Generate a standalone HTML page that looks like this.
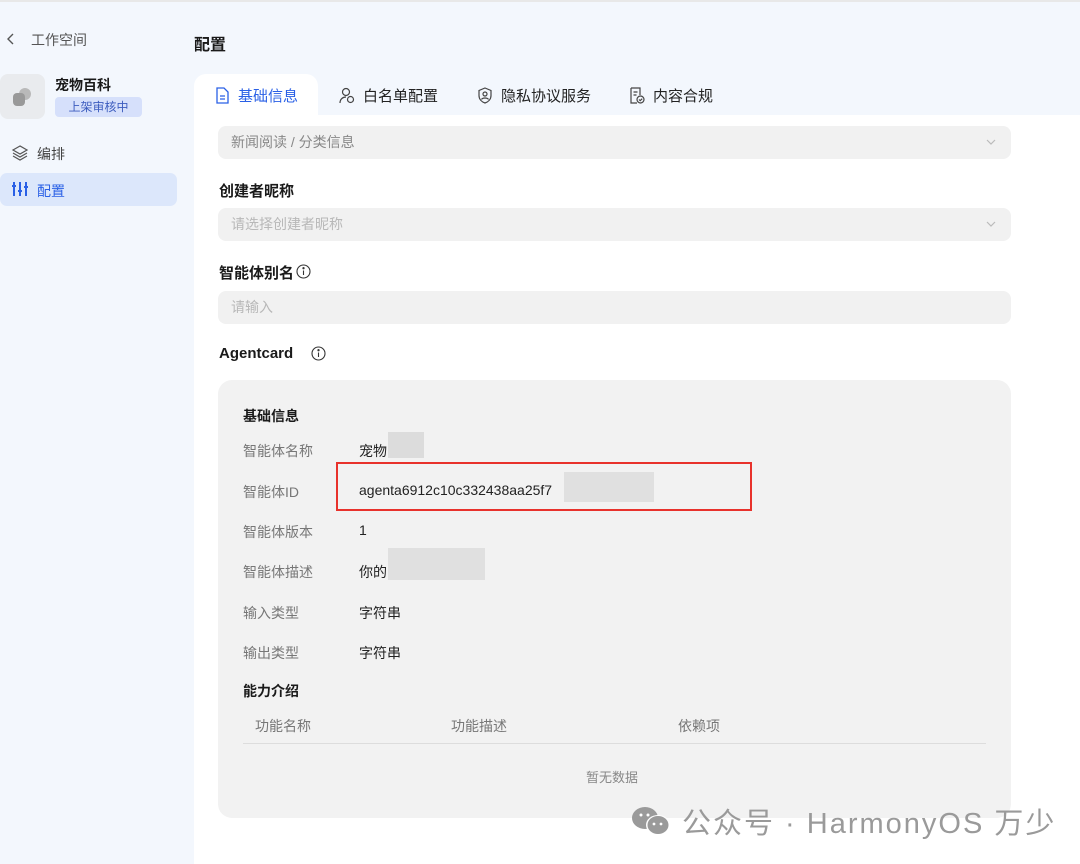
<!DOCTYPE html>
<html><head><meta charset="utf-8"><style>
*{margin:0;padding:0;box-sizing:border-box}
body{width:1080px;height:864px;overflow:hidden;background:#f3f7fd;font-family:"Liberation Sans","Noto Sans CJK SC",sans-serif;position:relative;color:#1a1a1a}
.a{position:absolute}
.topline{left:0;top:0;width:1080px;height:2px;background:#e8e8e8}
.main{left:194px;top:115px;width:886px;height:749px;background:#fff}
.tab{top:74px;height:42px;font-size:15px;display:flex;align-items:center;gap:8px;color:#222}
.inp{left:218px;width:793px;height:33px;background:#f1f1f1;border-radius:8px;font-size:14px;color:#888;padding-left:13px;line-height:33px}
.inp.ph{color:#b8b8b8}
.chev{position:absolute;right:14px;top:10px}
.lbl{left:219px;font-size:15px;font-weight:bold;color:#1a1a1a}
.k{left:243px;font-size:14px;color:#777}
.v{left:359px;font-size:14px;color:#222}
.blur{background:#e0e0e0}
</style></head><body>
<div class="a topline"></div>
<svg class="a" style="left:6px;top:32px" width="10" height="14" viewBox="0 0 10 14"><path d="M7 2L2 7l5 5" fill="none" stroke="#555" stroke-width="1.4"/></svg>
<div class="a" style="left:31px;top:30px;font-size:14px;color:#555">工作空间</div>
<div class="a" style="left:0;top:74px;width:45px;height:45px;background:#e9ebee;border-radius:8px"></div>
<svg class="a" style="left:10px;top:84px" width="26" height="26" viewBox="0 0 26 26"><circle cx="15" cy="10" r="6" fill="#b9b9b9"/><rect x="3" y="9" width="12" height="13" rx="4" fill="#999"/></svg>
<div class="a" style="left:55px;top:75px;font-size:14px;font-weight:bold">宠物百科</div>
<div class="a" style="left:55px;top:97px;width:87px;height:20px;background:#d6e0fb;border-radius:4px;font-size:12px;color:#3d5dbf;text-align:center;line-height:20px">上架审核中</div>
<svg class="a" style="left:11px;top:144px" width="18" height="18" viewBox="0 0 18 18" fill="none" stroke="#555" stroke-width="1.2"><path d="M9 2L2 6l7 4 7-4z"/><path d="M2 9l7 4 7-4"/><path d="M2 12l7 4 7-4"/></svg>
<div class="a" style="left:37px;top:144px;font-size:14px;color:#444">编排</div>
<div class="a" style="left:0;top:173px;width:177px;height:33px;background:#dce7fb;border-radius:7px"></div>
<svg class="a" style="left:11px;top:181px" width="18" height="16" viewBox="0 0 18 16" fill="none" stroke="#2a60e6" stroke-width="2"><path d="M3 1v14M9 1v14M15 1v14"/><path d="M1 5h4M7 10h4M13 6h4"/></svg>
<div class="a" style="left:37px;top:181px;font-size:14px;color:#2a60e6">配置</div>
<div class="a" style="left:194px;top:31px;font-size:16px;font-weight:bold">配置</div>
<div class="a main"></div>
<div class="a" style="left:194px;top:74px;width:124px;height:45px;background:#fff;border-radius:12px 12px 0 0"></div>
<div class="a tab" style="left:215px;color:#2a60e6"><svg width="15" height="17" viewBox="0 0 15 17" fill="none" stroke="#2a60e6" stroke-width="1.3"><path d="M2 1h7l4 4v11H2z"/><path d="M5 9h5M5 12h5"/></svg>基础信息</div>
<div class="a tab" style="left:339px"><svg width="16" height="17" viewBox="0 0 16 17" fill="none" stroke="#444" stroke-width="1.2"><circle cx="7" cy="5" r="3.5"/><path d="M1 16c0-4 3-6 6-6"/><circle cx="11.5" cy="12.5" r="3"/></svg>白名单配置</div>
<div class="a tab" style="left:477px"><svg width="16" height="17" viewBox="0 0 16 17" fill="none" stroke="#444" stroke-width="1.2"><path d="M8 1l6 2.5v5c0 4-3 6.5-6 7.5-3-1-6-3.5-6-7.5v-5z"/><circle cx="8" cy="7" r="2"/><path d="M4.5 12.5c1-2 6-2 7 0"/></svg>隐私协议服务</div>
<div class="a tab" style="left:629px"><svg width="16" height="17" viewBox="0 0 16 17" fill="none" stroke="#444" stroke-width="1.2"><path d="M2 1h9v7M2 1v15h6"/><path d="M4.5 5h4M4.5 8h3"/><circle cx="11.5" cy="12.5" r="3.5"/><path d="M10 12.5l1.2 1.2 2-2"/></svg>内容合规</div>
<div class="a inp" style="top:126px">新闻阅读 / 分类信息<svg class="chev" width="12" height="12" viewBox="0 0 12 12"><path d="M2 4l4 4 4-4" fill="none" stroke="#bbb" stroke-width="1.2"/></svg></div>
<div class="a lbl" style="top:180px">创建者昵称</div>
<div class="a inp ph" style="top:208px">请选择创建者昵称<svg class="chev" width="12" height="12" viewBox="0 0 12 12"><path d="M2 4l4 4 4-4" fill="none" stroke="#bbb" stroke-width="1.2"/></svg></div>
<div class="a lbl" style="top:262px">智能体别名</div>
<svg class="a" style="left:296px;top:264px" width="15" height="15" viewBox="0 0 15 15" fill="none" stroke="#333" stroke-width="1.1"><circle cx="7.5" cy="7.5" r="6.5"/><path d="M7.5 6.5v4.5"/><circle cx="7.5" cy="4.2" r=".6" fill="#333"/></svg>
<div class="a inp ph" style="top:291px">请输入</div>
<div class="a lbl" style="top:345px">Agentcard</div>
<svg class="a" style="left:311px;top:346px" width="15" height="15" viewBox="0 0 15 15" fill="none" stroke="#333" stroke-width="1.1"><circle cx="7.5" cy="7.5" r="6.5"/><path d="M7.5 6.5v4.5"/><circle cx="7.5" cy="4.2" r=".6" fill="#333"/></svg>
<div class="a" style="left:218px;top:380px;width:793px;height:438px;background:#f2f2f2;border-radius:14px"></div>
<div class="a" style="left:243px;top:406px;font-size:14px;font-weight:bold">基础信息</div>
<div class="a k" style="top:441px">智能体名称</div><div class="a v" style="top:441px">宠物</div>
<div class="a blur" style="left:388px;top:432px;width:36px;height:26px;background:#dcdcdc"></div>
<div class="a k" style="top:482px">智能体ID</div><div class="a v" style="top:482px">agenta6912c10c332438aa25f7</div>
<div class="a blur" style="left:564px;top:472px;width:90px;height:30px"></div>
<div class="a" style="left:336px;top:462px;width:416px;height:49px;border:2px solid #e8322c"></div>
<div class="a k" style="top:522px">智能体版本</div><div class="a v" style="top:522px">1</div>
<div class="a k" style="top:562px">智能体描述</div><div class="a v" style="top:562px">你的</div>
<div class="a blur" style="left:388px;top:548px;width:97px;height:32px"></div>
<div class="a k" style="top:603px">输入类型</div><div class="a v" style="top:603px">字符串</div>
<div class="a k" style="top:643px">输出类型</div><div class="a v" style="top:643px">字符串</div>
<div class="a" style="left:243px;top:681px;font-size:14px;font-weight:bold">能力介绍</div>
<div class="a k" style="left:255px;top:716px">功能名称</div>
<div class="a k" style="left:451px;top:716px">功能描述</div>
<div class="a k" style="left:678px;top:716px">依赖项</div>
<div class="a" style="left:243px;top:743px;width:743px;height:1px;background:#ddd"></div>
<div class="a" style="left:586px;top:767px;font-size:13px;color:#888">暂无数据</div>
<svg class="a" style="left:631px;top:806px" width="42" height="32" viewBox="0 0 42 32"><ellipse cx="14" cy="12" rx="13" ry="11" fill="#9a9a9a"/><ellipse cx="27" cy="19" rx="12" ry="10" fill="#fff"/><ellipse cx="27" cy="19" rx="10.5" ry="9" fill="#9a9a9a"/><circle cx="10" cy="9" r="1.5" fill="#fff"/><circle cx="17" cy="9" r="1.5" fill="#fff"/><circle cx="23" cy="18" r="1.4" fill="#fff"/><circle cx="30" cy="18" r="1.4" fill="#fff"/></svg>
<div class="a" style="left:682px;top:800px;font-size:29px;letter-spacing:2px;color:#9a9a9a;white-space:nowrap">公众号 · HarmonyOS 万少</div>
</body></html>
